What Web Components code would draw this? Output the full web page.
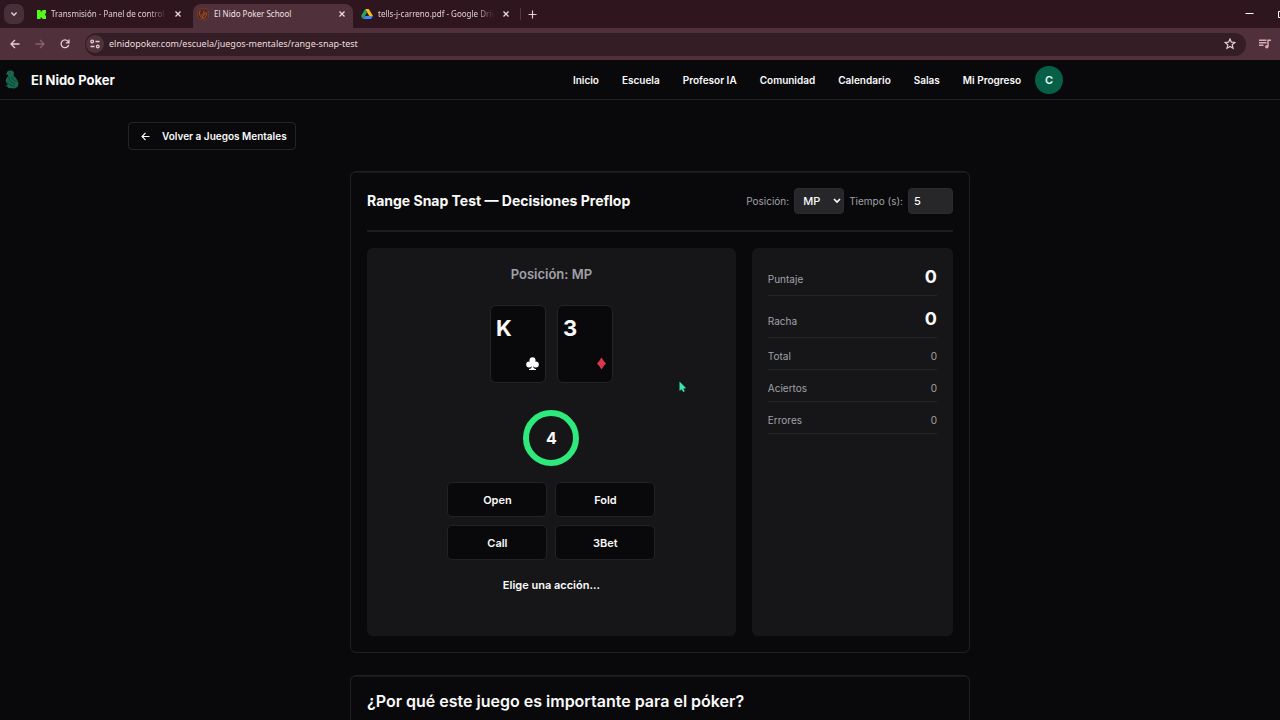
<!DOCTYPE html>
<html lang="es">
<head>
<meta charset="utf-8">
<meta name="viewport" content="width=device-width, initial-scale=1">
<title>El Nido Poker School</title>
<style>
  html, body { margin: 0; height: 100%; }
  body { background: #09090b; color: #fafafa; font-family: Inter, "Liberation Sans", sans-serif; overflow: hidden; }
</style>
</head>
<body>
<poker-app></poker-app>
<script>
const define = (name, html) => {
  const template = document.createElement('template');
  template.innerHTML = '<style>*{box-sizing:border-box}:host{box-sizing:border-box}</style>' + html;
  customElements.define(name, class extends HTMLElement {
    constructor() {
      super();
      this.attachShadow({ mode: 'open' }).append(template.content.cloneNode(true));
    }
  });
};

define('browser-tab', `
<style>
  :host { display: flex; align-items: center; gap: 5px; width: 160px; height: 24px; padding: 0 5px 4px 4px; color: #e2ced3; font-size: 8px; line-height: 16px; border-radius: 8px 8px 0 0; }
  :host([active]) { background: #50303a; color: #f1e4e7; }
  ::slotted(svg) { flex: none; }
  .text { flex: 1; white-space: nowrap; overflow: hidden; }
  :host([fade]) .text { -webkit-mask: linear-gradient(90deg, #000 84%, transparent); mask: linear-gradient(90deg, #000 84%, transparent); }
  button { flex: none; display: flex; padding: 2px; border: 0; background: none; color: #eadadd; }
</style>
<slot name="icon"></slot><span class="text"><slot></slot></span>
<button aria-label="Cerrar pestaña"><svg width="8" height="8" viewBox="0 0 8 8" fill="none" stroke="currentColor" stroke-width="1.300"><path d="M1.500 1.500l5 5M6.500 1.500l-5 5"/></svg></button>`);

define('browser-chrome', `
<style>
  :host { display: block; font-family: "Noto Sans", "Open Sans", sans-serif; }
  .strip { display: flex; align-items: flex-end; height: 28px; background: #2f151e; overflow: hidden; }
  button { display: flex; align-items: center; justify-content: center; padding: 0; border: 0; background: none; color: #e6cfd4; }
  .search { width: 20px; height: 20px; margin: 0 9px 4px 4px; border-radius: 7px; background: #48303a; }
  .tabs { display: flex; gap: 4px; }
  .first { width: 156px; }
  .sep { width: 1px; height: 12px; margin: 0 6px 8px 3px; background: #573642; }
  .new { width: 10px; height: 28px; }
  .win { display: flex; gap: 24px; margin-left: auto; margin-right: -7px; height: 26px; align-self: flex-start; }
  .bar { display: flex; align-items: center; height: 32px; background: #50303a; }
  .nav { display: flex; gap: 9px; padding: 0 12px 0 7px; }
  .nav button { width: 16px; height: 16px; }
  .nav .off { color: #886069; }
  .pill { flex: 1; display: flex; align-items: center; height: 23px; padding: 0 10px 0 1px; gap: 5px; border-radius: 12px; background: #351d25; }
  .site { width: 18px; height: 18px; border-radius: 9px; background: #50323b; }
  .url { flex: 1; min-width: 0; border: 0; padding: 0; background: none; color: #eadcdf; font: 9px/16px "Noto Sans", sans-serif; outline: 0; }
  .media { width: 34px; height: 24px; padding-left: 3px; }
</style>
<div class="strip">
  <button class="search" aria-label="Buscar pestañas"><svg width="8" height="8" viewBox="0 0 8 8" fill="none" stroke="currentColor" stroke-width="1.400"><path d="M1.400 2.600L4 5.200l2.600-2.600"/></svg></button>
  <div class="tabs">
  <browser-tab fade class="first">
    <svg slot="icon" width="9" height="9" viewBox="0 0 10 10"><path fill="#53fc18" d="M0 0h4v2h1V1h1V0h4v4H9v2h1v4H6V9H5V8H4v2H0z"/></svg>Transmisión - Panel de control de</browser-tab>
  <browser-tab active>
    <svg slot="icon" width="12" height="12" viewBox="0 0 12 12" fill="none" stroke="#b65234"><rect x=".8" y=".8" width="10.400" height="10.400" rx="2" fill="#4b261f" stroke="#763d2e"/><path d="M3 2.500C2 6 3 10 6 10s4-3 3-6M4 7c2 0 3-1 3-4.500M5 8.500c2 0 2-2 3-3.500"/></svg>El Nido Poker School</browser-tab>
  <browser-tab fade>
    <svg slot="icon" width="12" height="12" viewBox="0 0 12 12"><path fill="#f9bd19" d="M4.200 1h3.600L12 8H8.300z"/><path fill="#23a566" d="M4.200 1L6 4.200 2 11 0 8z"/><path fill="#4384f4" d="M4 8h8l-2 3H2z"/></svg>tells-j-carreno.pdf - Google Drive</browser-tab>
  </div>
  <span class="sep"></span>
  <button class="new" aria-label="Nueva pestaña"><svg width="9" height="9" viewBox="0 0 9 9" stroke="currentColor" stroke-width="1.200"><path d="M4.500.5v8M.5 4.500h8"/></svg></button>
  <div class="win">
    <button aria-label="Minimizar"><svg width="9" height="9" viewBox="0 0 9 9" stroke="#fff"><path d="M.5 4.500h8"/></svg></button>
    <button aria-label="Maximizar"><svg width="9" height="9" viewBox="0 0 9 9" fill="none" stroke="#fff"><path d="M.5 2.500h6v6h-6zM2.500.5h6v6"/></svg></button>
  </div>
</div>
<div class="bar">
  <div class="nav">
    <button aria-label="Atrás"><svg width="10" height="10" viewBox="0 0 10 10" fill="none" stroke="currentColor" stroke-width="1.300"><path d="M9.500 5H1M5 1L1 5l4 4"/></svg></button>
    <button class="off" aria-label="Adelante"><svg width="10" height="10" viewBox="0 0 10 10" fill="none" stroke="currentColor" stroke-width="1.300"><path d="M.5 5H9M5 1l4 4-4 4"/></svg></button>
    <button aria-label="Recargar"><svg width="10" height="10" viewBox="0 0 10 10" fill="none" stroke="currentColor" stroke-width="1.300"><path d="M8.700 6A3.900 3.900 0 1 1 8 2.300L9 3.600M9 .6v3.200H5.800"/></svg></button>
  </div>
  <div class="pill">
    <button class="site" aria-label="Información del sitio"><svg width="10" height="10" viewBox="0 0 10 10" fill="none" stroke="currentColor" stroke-width="1.300"><circle cx="2.200" cy="2.500" r="1.300"/><path d="M5.500 2.500h4M.5 7.500h4"/><circle cx="7.800" cy="7.500" r="1.300"/></svg></button>
    <input class="url" aria-label="Dirección" value="elnidopoker.com/escuela/juegos-mentales/range-snap-test">
    <button aria-label="Favorito"><svg width="12" height="12" viewBox="0 0 12 12" fill="none" stroke="currentColor" stroke-width="1.200"><path d="M6 1l1.400 3.200 3.500.3-2.700 2.300.8 3.400L6 8.400l-3 1.800.8-3.400L1.100 4.500l3.500-.3z"/></svg></button>
  </div>
  <button class="media" aria-label="Controlar multimedia"><svg width="12" height="10" viewBox="0 0 12 10" fill="none" stroke="#d5aab3" stroke-width="1.500"><path d="M0 1.200h7.500M0 3.700h7.500M0 6.200h4.500M9 7.500V1.200h3"/><circle cx="7.800" cy="7.800" r="1" fill="#d5aab3"/></svg></button>
</div>`);

define('site-header', `
<style>
  :host { display: flex; align-items: center; height: 40px; padding: 0 217px 0 5px; border-bottom: 1px solid #222225; }
  a { color: inherit; text-decoration: none; white-space: nowrap; }
  .brand { display: flex; align-items: center; gap: 11px; font-size: 13px; line-height: 20px; font-weight: 700; }
  nav { display: flex; align-items: center; gap: 23px; margin-left: auto; font-size: 10px; line-height: 16px; font-weight: 600; }
  .avatar { width: 28px; height: 28px; margin-left: -9px; padding: 0; border: 0; border-radius: 50%; background: #065f46; color: #ecfdf5; font: 600 11px/16px Inter, sans-serif; }
</style>
<a class="brand" href="#"><svg width="15" height="19" viewBox="0 0 15 19"><path fill="#17684d" d="M2 3C2 1 4 .3 6 .6c2 .2 3 1.400 3 3L8.500 6c2 1 4.500 4 5 8l-1 3-3 1.500-6-.5-3-3 2.500.2L1 12c-.6-2 .2-4.500 2.500-6L2.300 4.500.5 4.300z"/><path fill="none" stroke="#0a3528" stroke-width=".7" d="M4 7c0 4 3 6 6 7M7 7c0 3 3 4 5 5M2 12c2 3 5 4 8 4M4.500 3h1"/></svg>El Nido Poker</a>
<nav><a href="#">Inicio</a><a href="#">Escuela</a><a href="#">Profesor IA</a><a href="#">Comunidad</a><a href="#">Calendario</a><a href="#">Salas</a><a href="#">Mi Progreso</a><button class="avatar">C</button></nav>`);

define('back-link', `
<style>
  :host { display: flex; }
  a { display: flex; align-items: center; gap: 12px; height: 28px; padding: 0 8px 0 12px; border: 1px solid #242427; border-radius: 4px; color: #fafafa; font-size: 10px; line-height: 16px; font-weight: 600; text-decoration: none; white-space: nowrap; }
</style>
<a href="#"><svg width="9" height="9" viewBox="0 0 9 9" fill="none" stroke="currentColor" stroke-width="1.100"><path d="M8.500 4.500H1M4.500 1L1 4.500 4.500 8"/></svg><slot></slot></a>`);

define('panel-card', `
<style>
  :host { display: block; border: 1px solid #202023; border-radius: 6px; padding: 16px; box-shadow: inset 0 1px #18181b; }
</style><slot></slot>`);

define('playing-card', `
<style>
  :host { display: flex; flex-direction: column; justify-content: space-between; width: 56px; height: 78px; padding: 8px 6px 12px 5px; border: 1px solid #242427; border-radius: 6px; background: #09090b; font-size: 22px; line-height: 28px; font-weight: 700; }
  ::slotted(svg) { align-self: flex-end; }
</style><slot></slot><slot name="suit"></slot>`);

define('countdown-ring', `
<style>
  :host { display: flex; align-items: center; justify-content: center; width: 56px; height: 56px; border: 6px solid #2eea7c; border-radius: 50%; font-size: 16px; line-height: 24px; font-weight: 700; }
</style><slot></slot>`);

define('action-button', `
<style>
  :host { display: block; }
  button { width: 100%; height: 35px; padding: 0; border: 1px solid #222225; border-radius: 5px; background: #09090b; color: #fafafa; font: 600 11px/16px Inter, sans-serif; }
</style><button><slot></slot></button>`);

define('stat-row', `
<style>
  :host { display: flex; align-items: baseline; justify-content: space-between; padding: 10px 0 5px; border-bottom: 1px solid #252528; color: #a1a1aa; font-size: 10px; line-height: 16px; }
  :host([big]) { padding: 9px 0 4px; }
  :host([big]) b { color: #fafafa; font-size: 18px; line-height: 28px; font-weight: 700; }
  b { font-weight: 400; }
</style><span><slot></slot></span><b><slot name="value"></slot></b>`);

define('snap-test', `
<style>
  :host { display: block; }
  header { display: flex; align-items: center; justify-content: space-between; padding-bottom: 16px; border-bottom: 2px solid #1c1c1f; margin-bottom: 16px; }
  h1 { margin: 0; font-size: 14px; line-height: 24px; font-weight: 700; white-space: nowrap; }
  form { display: flex; align-items: center; gap: 5px; color: #a1a1aa; font-size: 10px; line-height: 16px; white-space: nowrap; }
  .pick { display: grid; align-items: center; }
  .pick > * { grid-area: 1 / 1; }
  .pick svg { justify-self: end; margin-right: 3px; pointer-events: none; }
  select, input { appearance: none; height: 26px; margin: 0; border: 1px solid #2c2c2f; border-radius: 4px; background: #27272a; color: #fafafa; font: 500 11px/16px Inter, sans-serif; outline: 0; }
  select { width: 50px; padding: 0 8px; }
  input { width: 45px; padding: 0 5px; }
  .board { display: grid; grid-template-columns: 11fr 6fr; gap: 16px; }
  .play, .stats { border-radius: 6px; background: #161618; }
  .play { display: flex; flex-direction: column; align-items: center; padding: 16px 16px 42px; }
  h2 { margin: 0 0 21px; color: #a1a1aa; font-size: 13px; line-height: 20px; font-weight: 600; }
  .hand { display: flex; gap: 11px; margin-bottom: 27px; }
  .actions { display: grid; grid-template-columns: 100px 100px; gap: 8px; margin: 16px 0; }
  p { margin: 0; font-size: 11px; line-height: 18px; font-weight: 600; }
  .stats { padding: 6px 16px; }
</style>
<header>
  <h1>Range Snap Test — Decisiones Preflop</h1>
  <form>
    <label for="pos">Posición:</label>
    <span class="pick"><select id="pos"><option>MP</option></select><svg width="8" height="6" viewBox="0 0 8 6" fill="none" stroke="#fff" stroke-width="1.600"><path d="M1 1l3 3 3-3"/></svg></span>
    <label for="time">Tiempo (s):</label>
    <input id="time" inputmode="numeric" value="5">
  </form>
</header>
<div class="board">
  <section class="play">
    <h2>Posición: MP</h2>
    <div class="hand">
      <playing-card>K<svg slot="suit" width="13" height="13" viewBox="0 0 13 13" fill="#fff"><circle cx="6.500" cy="3.200" r="3"/><circle cx="3.200" cy="7.400" r="3"/><circle cx="9.800" cy="7.400" r="3"/><path d="M5.800 5h1.400v4c0 2 1 2.800 2.800 3v1H3v-1c1.800-.2 2.800-1 2.800-3z"/></svg></playing-card>
      <playing-card>3<svg slot="suit" width="9" height="13" viewBox="0 0 9 13"><path fill="#d7384e" d="M4.500.5Q6.500 4 9 6.500 6.500 9 4.500 12.500 2.500 9 0 6.500 2.500 4 4.500.5z"/></svg></playing-card>
    </div>
    <countdown-ring>4</countdown-ring>
    <div class="actions">
      <action-button>Open</action-button><action-button>Fold</action-button>
      <action-button>Call</action-button><action-button>3Bet</action-button>
    </div>
    <p>Elige una acción...</p>
  </section>
  <section class="stats">
    <stat-row big>Puntaje<span slot="value">0</span></stat-row>
    <stat-row big>Racha<span slot="value">0</span></stat-row>
    <stat-row>Total<span slot="value">0</span></stat-row>
    <stat-row>Aciertos<span slot="value">0</span></stat-row>
    <stat-row>Errores<span slot="value">0</span></stat-row>
  </section>
</div>`);

define('poker-app', `
<style>
  :host { display: flex; flex-direction: column; height: 100vh; overflow: hidden; }
  browser-chrome, site-header { flex: none; }
  main { position: relative; flex: 1; min-height: 0; overflow: hidden; padding: 22px 88px 0 128px; }
  .column { display: grid; gap: 22px; max-width: 620px; margin: 21px auto 0; padding-bottom: 40px; }
  h2 { margin: 0; font-size: 16px; line-height: 18px; font-weight: 600; white-space: nowrap; }
  .more { padding-bottom: 48px; }
  .cursor { position: absolute; left: 679px; top: 281px; }
</style>
<browser-chrome></browser-chrome>
<site-header></site-header>
<main>
  <back-link>Volver a Juegos Mentales</back-link>
  <div class="column">
    <panel-card><snap-test></snap-test></panel-card>
    <panel-card class="more"><h2>¿Por qué este juego es importante para el póker?</h2></panel-card>
  </div>
  <svg class="cursor" width="8" height="12" viewBox="0 0 8 12"><path fill="#35e9ae" d="M.5.500v9.500l2-1.800L4.300 11l1.500-.8-1.500-2.700 2.900-.3z"/></svg>
</main>`);
</script>
</body>
</html>
